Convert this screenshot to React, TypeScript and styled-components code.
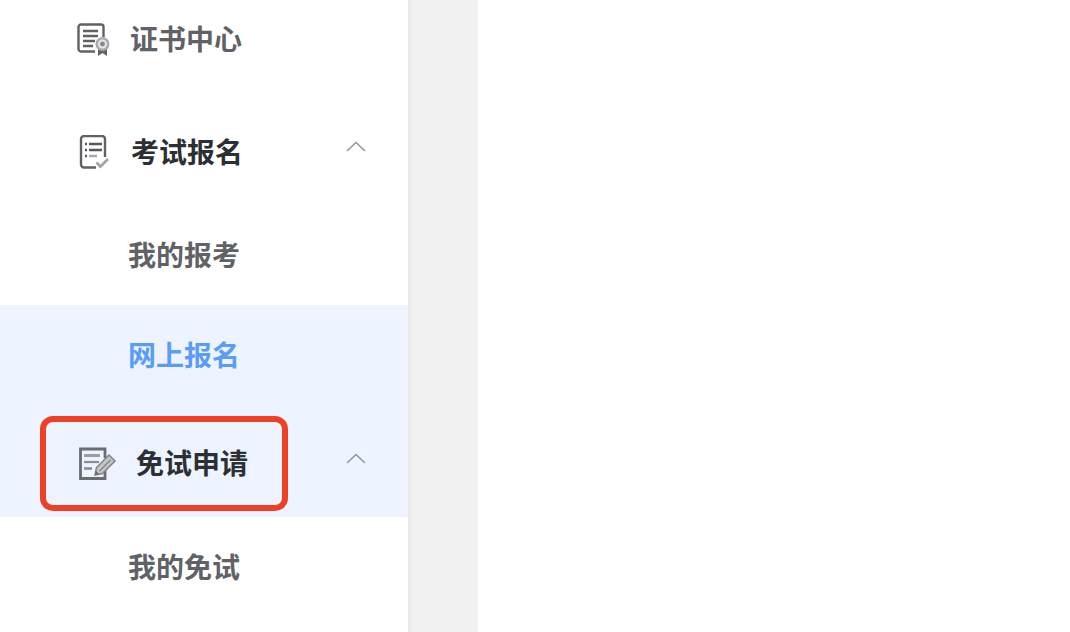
import React from 'react';
import styled, { createGlobalStyle } from 'styled-components';

const GlobalStyle = createGlobalStyle`
  html, body {
    margin: 0;
    height: 100%;
    overflow: hidden;
    background: #fff;
  }
  #root {
    height: 100%;
  }
`;

const Page = styled.div`
  display: flex;
  height: 632px;
  overflow: hidden;
  font-family: "Noto Sans CJK SC", "Liberation Sans", sans-serif;
`;

const Sidebar = styled.nav`
  width: 408px;
  flex: none;
  margin-top: -16px;
  background: #fff;
`;

const Gutter = styled.div`
  width: 70px;
  flex: none;
  background: #f1f1f1;
  box-shadow: inset 6px 0 6px -5px #e4e4e4;
`;

const Content = styled.main`
  flex: 1;
  background: #fff;
`;

const MenuRow = styled.div<{ $height: number; $active?: boolean }>`
  position: relative;
  display: flex;
  align-items: center;
  height: ${(p) => p.$height}px;
  background: ${(p) => (p.$active ? '#edf4ff' : 'transparent')};
`;

const IconSlot = styled.span<{ $width: number; $left?: number; $top?: number }>`
  display: flex;
  flex: none;
  width: ${(p) => p.$width}px;
  margin-left: ${(p) => p.$left ?? 77}px;
  margin-top: ${(p) => p.$top ?? 0}px;
`;

const GroupLabel = styled.span<{ $dark?: boolean; $top?: number }>`
  font-size: 28px;
  font-weight: 700;
  line-height: 40px;
  margin-top: ${(p) => p.$top ?? 0}px;
  color: ${(p) => (p.$dark ? '#2c2f33' : '#606266')};
`;

const SubItem = styled.div<{ $active?: boolean }>`
  display: flex;
  align-items: center;
  box-sizing: border-box;
  height: 100px;
  padding: 0 0 2px 128px;
  font-size: 28px;
  font-weight: 700;
  color: ${(p) => (p.$active ? '#5a9cf8' : '#606266')};
  background: ${(p) => (p.$active ? '#edf4ff' : 'transparent')};
`;

const Caret = styled.svg<{ $top: number }>`
  position: absolute;
  right: 42px;
  top: 50%;
  margin-top: ${(p) => p.$top}px;
  width: 20px;
  height: 12px;
  fill: none;
  stroke: #8f9399;
  stroke-width: 1.5;
`;

const Highlight = styled.div`
  position: absolute;
  left: 40px;
  top: 11px;
  width: 248px;
  height: 95px;
  box-sizing: border-box;
  border: 6px solid #ee4026;
  border-radius: 13px;
`;

const CertIcon = () => (
  <svg width="34" height="34" viewBox="0 0 34 34" fill="none">
    <path d="M18 28.500H4a2.500 2.500 0 0 1-2.500-2.500V4A2.500 2.500 0 0 1 4 1.500h20A2.500 2.500 0 0 1 26.500 4v10" stroke="#5f6165" strokeWidth="2.400" />
    <path d="M6 8h15M6 13h15M6 18h12M6 23h10" stroke="#5f6165" strokeWidth="2.400" />
    <path d="M21 25v8l4.500-3 4.500 3v-8" fill="#5f6165" />
    <circle cx="25.500" cy="21" r="7" fill="#a9abae" />
    <circle cx="25.500" cy="21" r="4.500" fill="#e6e6e7" />
    <circle cx="25.500" cy="21" r="2.400" fill="#85878b" />
  </svg>
);

const ExamIcon = () => (
  <svg width="32" height="34" viewBox="0 0 32 34" fill="none">
    <path d="M18 32.500H6a3 3 0 0 1-3-3V4a3 3 0 0 1 3-3h18a3 3 0 0 1 3 3v18" stroke="#5f6165" strokeWidth="2.400" />
    <path d="M7 9h2M11 9h13M7 15h2M11 15h13" stroke="#56585c" strokeWidth="2.600" />
    <path d="M7 21h2" stroke="#56585c" strokeWidth="2.400" />
    <path d="M11 21h8" stroke="#a6a8ab" strokeWidth="2.400" />
    <path d="M18.500 27.500l4 4 7.500-7.500" stroke="#a3a5a8" strokeWidth="2.800" />
  </svg>
);

const ExemptIcon = () => (
  <svg width="40" height="36" viewBox="0 0 40 36" fill="none">
    <path d="M28 20v12.500H3.500V3H28v9" stroke="#6a6c70" strokeWidth="2.800" />
    <path d="M7 9.500h16" stroke="#9b9da0" strokeWidth="3" />
    <path d="M7 16h15" stroke="#8b8d90" strokeWidth="2.200" />
    <path d="M7 22.500h8" stroke="#8b8d90" strokeWidth="2.600" />
    <path d="M18 29l1.500-7.500L32 9l6 6-12.500 12.500z" fill="#c2c4c6" stroke="#818386" strokeWidth="1.500" />
    <path d="M22.500 25l11-11" stroke="#818386" strokeWidth="1.200" />
    <path d="M18 29l1-4 3 3z" fill="#66686c" />
  </svg>
);

const CaretUp = ({ top }: { top: number }) => (
  <Caret viewBox="0 0 20 12" $top={top}>
    <path d="M1 11l9-8.500 9 8.500" />
  </Caret>
);

export default function App() {
  return (
    <>
      <GlobalStyle />
      <Page>
        <Sidebar>
          <MenuRow $height={112}>
            <IconSlot $width={53}>
              <CertIcon />
            </IconSlot>
            <GroupLabel $top={-4}>证书中心</GroupLabel>
          </MenuRow>
          <MenuRow $height={109}>
            <IconSlot $width={53} $left={78} $top={2}>
              <ExamIcon />
            </IconSlot>
            <GroupLabel $dark>考试报名</GroupLabel>
            <CaretUp top={-11} />
          </MenuRow>
          <SubItem>我的报考</SubItem>
          <SubItem $active>网上报名</SubItem>
          <MenuRow $height={112} $active>
            <IconSlot $width={59} $top={6}>
              <ExemptIcon />
            </IconSlot>
            <GroupLabel $dark $top={2}>免试申请</GroupLabel>
            <CaretUp top={-9} />
            <Highlight />
          </MenuRow>
          <SubItem>我的免试</SubItem>
        </Sidebar>
        <Gutter />
        <Content />
      </Page>
    </>
  );
}
